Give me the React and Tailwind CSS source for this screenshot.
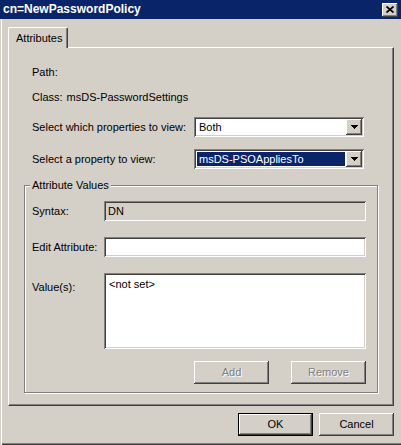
import React from 'react';

const raised = 'shadow-[inset_-1px_-1px_0_#404040,inset_1px_1px_0_#ffffff,inset_-2px_-2px_0_#808080]';
const sunken = 'shadow-[inset_1px_1px_0_#808080,inset_-1px_-1px_0_#ffffff,inset_2px_2px_0_#404040,inset_-2px_-2px_0_#d4d0c8]';

function Arrow() {
    return (
        <svg width="7" height="4" viewBox="0 0 7 4" shapeRendering="crispEdges">
            <path d="M0 0h7v1H0zM1 1h5v1H1zM2 2h3v1H2zM3 3h1v1H3z" fill="#000" />
        </svg>
    );
}

function Select({ value, selected }) {
    return (
        <div className={`flex h-[20px] w-[170px] items-stretch bg-white p-[2px] ${sunken}`}>
            <div className={`m-[1px] flex flex-1 items-center pl-[2px] ${selected ? 'bg-[#0a246a] text-white' : 'text-black'}`}>
                {value}
            </div>
            <div className={`flex w-[16px] items-center justify-center bg-[#d4d0c8] ${raised}`}>
                <Arrow />
            </div>
        </div>
    );
}

function Button({ label, disabled, isDefault }) {
    return (
        <button
            type="button"
            className={`flex h-[23px] w-[75px] items-center justify-center bg-[#d4d0c8] ${isDefault ? 'border border-black' : ''} ${raised} ${disabled ? 'text-[#808080] [text-shadow:1px_1px_0_#ffffff]' : 'text-black'}`}
        >
            {label}
        </button>
    );
}

export default function App() {
    return (
        <div className="flex h-[445px] w-[401px] flex-col bg-[#d4d0c8] font-['Liberation_Sans',Arial,sans-serif] text-[11px] leading-[13px] text-black shadow-[inset_1px_0_0_#d4d0c8,inset_2px_0_0_#ffffff,inset_0_-1px_0_#404040,inset_0_-2px_0_#808080]">
            <div className="flex h-[19px] items-center justify-between bg-[#0a246a] pl-[3px] pr-[3px]">
                <span className="text-[12px] font-bold text-white">cn=NewPasswordPolicy</span>
                <div className={`flex h-[14px] w-[16px] items-center justify-center bg-[#d4d0c8] ${raised}`}>
                    <svg width="8" height="7" viewBox="0 0 8 7">
                        <path d="M0.5 0.5L7.5 6.5M7.5 0.5L0.5 6.5" stroke="#000" strokeWidth="1.7" />
                    </svg>
                </div>
            </div>

            <div className="flex flex-col pl-[8px] pr-[7px] pt-[8px]">
                <div className="flex">
                    <div className="relative z-10 -mb-px flex h-[21px] w-[60px] items-center rounded-tl-[2px] rounded-tr-[2px] border-l border-t border-r border-l-white border-t-white border-r-[#404040] bg-[#d4d0c8] pl-[7px] shadow-[inset_-1px_0_0_#808080]">
                        Attributes
                    </div>
                </div>

                <div className="flex h-[359px] flex-col border border-b-[#404040] border-l-white border-r-[#404040] border-t-white px-[15px] pt-[18px] shadow-[inset_-1px_-1px_0_#808080]">
                    <div className="h-[13px] pl-[8px]">Path:</div>
                    <div className="mt-[12px] flex h-[13px] pl-[8px]">
                        <span>Class:</span>
                        <span className="ml-[4px]">msDS-PasswordSettings</span>
                    </div>

                    <div className="mt-[13px] flex items-center pl-[8px]">
                        <span className="w-[162px]">Select which properties to view:</span>
                        <Select value="Both" />
                    </div>
                    <div className="mt-[12px] flex items-center pl-[8px]">
                        <span className="w-[162px]">Select a property to view:</span>
                        <Select value="msDS-PSOAppliesTo" selected />
                    </div>

                    <fieldset className="mt-[10px] border border-[#808080] pb-[8px] pl-[7px] pr-[11px] shadow-[inset_1px_1px_0_#ffffff,1px_1px_0_#ffffff]">
                        <legend className="-ml-[2px] bg-[#d4d0c8] px-[2px]">Attribute Values</legend>

                        <div className="mt-[9px] flex items-center">
                            <span className="w-[72px]">Syntax:</span>
                            <div className={`flex h-[20px] flex-1 items-center bg-[#d4d0c8] pl-[4px] ${sunken}`}>DN</div>
                        </div>

                        <div className="mt-[16px] flex items-center">
                            <span className="w-[72px]">Edit Attribute:</span>
                            <div className={`h-[20px] flex-1 bg-white ${sunken}`}></div>
                        </div>

                        <div className="mt-[16px] flex items-start">
                            <span className="mt-[8px] w-[72px]">Value(s):</span>
                            <div className={`h-[76px] flex-1 bg-white pl-[5px] pt-[5px] ${sunken}`}>&lt;not set&gt;</div>
                        </div>

                        <div className="mt-[12px] flex justify-end gap-[22px]">
                            <Button label="Add" disabled />
                            <Button label="Remove" disabled />
                        </div>
                    </fieldset>
                </div>

                <div className="mt-[7px] flex justify-end gap-[6px]">
                    <Button label="OK" isDefault />
                    <Button label="Cancel" />
                </div>
            </div>
        </div>
    );
}
